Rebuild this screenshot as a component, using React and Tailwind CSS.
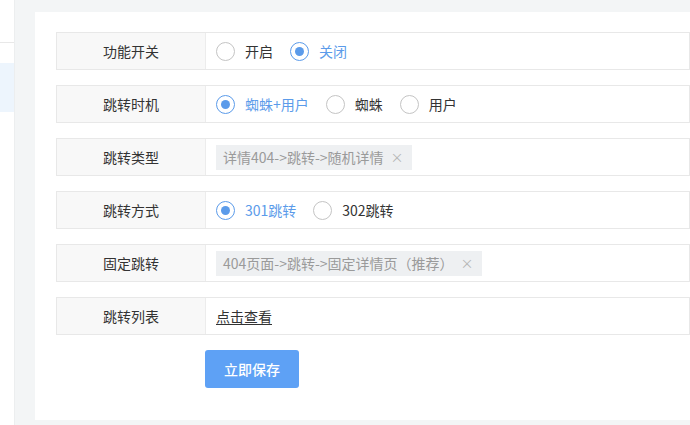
import React, { useState } from 'react';

function Radio({ checked, label, onClick }) {
    return (
        <label onClick={onClick} className="flex items-center mr-[17px] cursor-pointer">
            <span className={`w-[19px] h-[19px] rounded-full border flex items-center justify-center ${checked ? 'border-[#5b9bea]' : 'border-[#c4c4c4]'}`}>
                {checked && <span className="w-[9px] h-[9px] rounded-full bg-[#5b9bea]" />}
            </span>
            <span className={`ml-[10px] text-[14px] ${checked ? 'text-[#5b9bea]' : 'text-[#333]'}`}>{label}</span>
        </label>
    );
}

function Tag({ text }) {
    return (
        <span className="inline-flex items-center h-[25px] pl-[7px] pr-[8px] bg-[#eef0f2] text-[14px] text-[#9a9a9a]">
            {text}
            <span className="ml-[7px] text-[13px] text-[#b5b5b5]">×</span>
        </span>
    );
}

function Row({ label, children }) {
    return (
        <div className="flex h-[38px] border border-[#e8e8e8] mb-[15px]">
            <div className="w-[149px] shrink-0 flex items-center justify-center bg-[#f8f8f8] border-r border-[#ececec] text-[14px] text-[#333]">
                {label}
            </div>
            <div className="flex-1 flex items-center pl-[10px]">{children}</div>
        </div>
    );
}

export default function App() {
    const [onoff, setOnoff] = useState('off');
    const [timing, setTiming] = useState('both');
    const [mode, setMode] = useState('301');

    return (
        <div className="flex w-[690px] h-[425px] overflow-hidden bg-[#f3f5f6]" style={{ fontFamily: '"Noto Sans CJK SC", "Noto Sans", sans-serif' }}>
            <div className="w-[15px] shrink-0 bg-white border-r border-[#eceeef] flex flex-col">
                <div className="h-[43px] border-b border-[#e8e8e8]" />
                <div className="h-[20px]" />
                <div className="h-[49px] bg-[#edf5fd]" />
            </div>
            <div className="flex-1 pl-[20px] pt-[12px] pb-[5px]">
                <div className="h-full bg-white pl-[21px] pt-[20px]">
                    <Row label="功能开关">
                        <Radio checked={onoff === 'on'} label="开启" onClick={() => setOnoff('on')} />
                        <Radio checked={onoff === 'off'} label="关闭" onClick={() => setOnoff('off')} />
                    </Row>
                    <Row label="跳转时机">
                        <Radio checked={timing === 'both'} label="蜘蛛+用户" onClick={() => setTiming('both')} />
                        <Radio checked={timing === 'spider'} label="蜘蛛" onClick={() => setTiming('spider')} />
                        <Radio checked={timing === 'user'} label="用户" onClick={() => setTiming('user')} />
                    </Row>
                    <Row label="跳转类型">
                        <Tag text="详情404->跳转->随机详情" />
                    </Row>
                    <Row label="跳转方式">
                        <Radio checked={mode === '301'} label="301跳转" onClick={() => setMode('301')} />
                        <Radio checked={mode === '302'} label="302跳转" onClick={() => setMode('302')} />
                    </Row>
                    <Row label="固定跳转">
                        <Tag text="404页面->跳转->固定详情页（推荐）" />
                    </Row>
                    <Row label="跳转列表">
                        <a className="text-[14px] text-[#333] underline underline-offset-2 cursor-pointer">点击查看</a>
                    </Row>
                    <div className="pl-[149px]">
                        <button className="w-[94px] h-[38px] rounded-[3px] bg-[#5ea1f5] text-white text-[14px] font-medium">
                            立即保存
                        </button>
                    </div>
                </div>
            </div>
        </div>
    );
}
